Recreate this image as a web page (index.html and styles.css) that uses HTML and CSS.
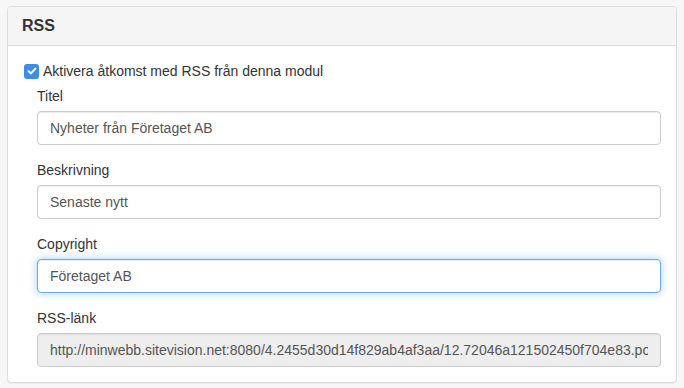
FILE: index.html
```html
<!DOCTYPE html>
<html lang="sv">
<head>
    <meta charset="UTF-8">
    <meta name="viewport" content="width=device-width, initial-scale=1.0">
    <title>RSS</title>
    <link rel="stylesheet" href="styles.css">
</head>
<body>
    <div class="panel">
        <div class="panel-heading">
            <h3 class="panel-title">RSS</h3>
        </div>
        <div class="panel-body">
            <label class="checkbox">
                <span class="check-box">
                    <svg width="10" height="10" viewBox="0 0 10 10"><path d="M1.6 5.2 L4 7.4 L8.4 2.6" fill="none" stroke="#fff" stroke-width="2" stroke-linecap="round" stroke-linejoin="round"/></svg>
                </span>
                Aktivera åtkomst med RSS från denna modul
            </label>
            <div class="fields">
                <div class="form-group">
                    <label for="title">Titel</label>
                    <input type="text" id="title" class="form-control" value="Nyheter från Företaget AB">
                </div>
                <div class="form-group">
                    <label for="desc">Beskrivning</label>
                    <input type="text" id="desc" class="form-control" value="Senaste nytt">
                </div>
                <div class="form-group">
                    <label for="copyright">Copyright</label>
                    <input type="text" id="copyright" class="form-control focused" value="Företaget AB">
                </div>
                <div class="form-group">
                    <label for="link">RSS-länk</label>
                    <input type="text" id="link" class="form-control" readonly value="http://minwebb.sitevision.net:8080/4.2455d30d14f829ab4af3aa/12.72046a121502450f704e83.portlet">
                </div>
            </div>
        </div>
    </div>
</body>
</html>
```

FILE: styles.css
```css
* {
    box-sizing: border-box;
}
body {
    font-family: "Liberation Sans", Arial, sans-serif;
    font-size: 14px;
    line-height: 20px;
    color: #333;
    margin: 0;
    padding: 6px 7px 5px 7px;
    background-color: #f7f7f7;
}
.panel {
    background-color: #fff;
    border: 1px solid #ddd;
    border-radius: 4px;
    box-shadow: 0 1px 1px rgba(0,0,0,0.05);
}
.panel-heading {
    background-color: #f5f5f5;
    border-bottom: 1px solid #ddd;
    border-radius: 3px 3px 0 0;
    padding: 10px 14px;
}
.panel-title {
    margin: 0;
    font-size: 16px;
    line-height: 18px;
    font-weight: bold;
    color: #333;
}
.panel-body {
    padding: 15px 15px 0 15px;
}
.checkbox {
    display: flex;
    align-items: center;
    gap: 4px;
    margin-bottom: 5px;
}
.check-box {
    display: inline-flex;
    align-items: center;
    justify-content: center;
    width: 15px;
    height: 15px;
    margin-left: 1px;
    border-radius: 3px;
    background-color: #3d8ee3;
}
.fields {
    margin-left: 14px;
}
.form-group {
    margin-bottom: 15px;
}
.form-group label {
    display: block;
    margin-bottom: 5px;
}
.form-control {
    display: block;
    width: 100%;
    height: 34px;
    padding: 6px 12px;
    font-family: inherit;
    font-size: 14px;
    color: #555;
    background-color: #fff;
    border: 1px solid #ccc;
    border-radius: 4px;
    box-shadow: inset 0 1px 1px rgba(0,0,0,0.075);
    outline: none;
}
.form-control.focused {
    border-color: #66afe9;
    box-shadow: inset 0 1px 1px rgba(0,0,0,0.075), 0 0 8px rgba(102,175,233,0.6);
}
.form-control[readonly] {
    background-color: #eee;
}
```
